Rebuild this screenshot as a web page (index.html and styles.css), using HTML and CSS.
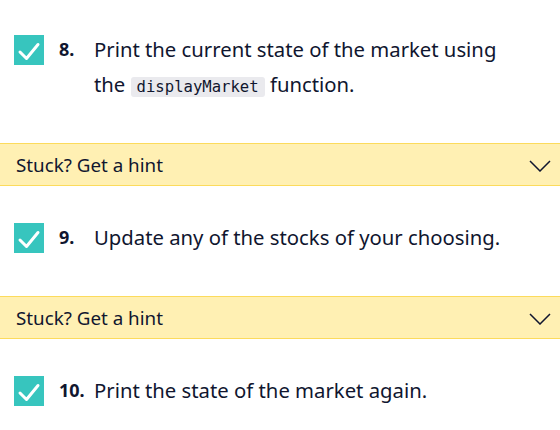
FILE: index.html
```html
<!DOCTYPE html>
<html lang="en">
<head>
<meta charset="utf-8">
<title>Checkpoints</title>
<link rel="stylesheet" href="styles.css">
</head>
<body>
<ol class="steps">
  <li class="step">
    <div class="task">
      <span class="check"><svg viewBox="0 0 30 30" width="30" height="30"><rect width="30" height="30" fill="#37c5be"/><polyline points="6,17 12.5,23.5 24,9.5" fill="none" stroke="#fff" stroke-width="3" stroke-linecap="round" stroke-linejoin="round"/></svg></span>
      <span class="num">8.</span>
      <p class="text"><span>Print the current state of the market using the</span> <code>displayMarket</code> <span>function.</span></p>
    </div>
    <div class="hint"><span>Stuck? Get a hint</span><svg class="chev" viewBox="0 0 22 12" width="22" height="12"><polyline points="1,1 11,11 21,1" fill="none" stroke="#10162f" stroke-width="1.5"/></svg></div>
  </li>
  <li class="step">
    <div class="task">
      <span class="check"><svg viewBox="0 0 30 30" width="30" height="30"><rect width="30" height="30" fill="#37c5be"/><polyline points="6,17 12.5,23.5 24,9.5" fill="none" stroke="#fff" stroke-width="3" stroke-linecap="round" stroke-linejoin="round"/></svg></span>
      <span class="num">9.</span>
      <p class="text">Update any of the stocks of your choosing.</p>
    </div>
    <div class="hint"><span>Stuck? Get a hint</span><svg class="chev" viewBox="0 0 22 12" width="22" height="12"><polyline points="1,1 11,11 21,1" fill="none" stroke="#10162f" stroke-width="1.5"/></svg></div>
  </li>
  <li class="step">
    <div class="task">
      <span class="check"><svg viewBox="0 0 30 30" width="30" height="30"><rect width="30" height="30" fill="#37c5be"/><polyline points="6,17 12.5,23.5 24,9.5" fill="none" stroke="#fff" stroke-width="3" stroke-linecap="round" stroke-linejoin="round"/></svg></span>
      <span class="num">10.</span>
      <p class="text">Print the state of the market again.</p>
    </div>
  </li>
</ol>
</body>
</html>
```
FILE: styles.css
```css
html, body {
  margin: 0;
  padding: 0;
  background: #fff;
}
body {
  font-family: "Noto Sans", sans-serif;
  color: #10162f;
}
.steps {
  list-style: none;
  margin: 0;
  padding: 0;
}
.task {
  display: flex;
  align-items: flex-start;
  padding: 34px 40px 41px 14px;
}
.step:first-child .task {
  padding-top: 32px;
}
.check {
  flex: none;
  display: flex;
  align-items: center;
  height: 35px;
  width: 30px;
  margin-right: 15px;
}
.check svg {
  display: block;
}
.num {
  flex: none;
  width: 35px;
  font-weight: 700;
  font-size: 18px;
  line-height: 35px;
}
.text {
  margin: 0;
  flex: 1;
  font-size: 20.3px;
  line-height: 35px;
}
code {
  display: inline-block;
  font-family: "DejaVu Sans Mono", monospace;
  font-size: 15.6px;
  line-height: 20px;
  background: #eaeaee;
  border-radius: 3px;
  padding: 0 6px;
  color: #10162f;
}
.hint {
  display: flex;
  align-items: center;
  justify-content: space-between;
  height: 41px;
  padding: 0 9px 0 16px;
  background: #fff0b3;
  border-top: 1px solid #fcdb5c;
  border-bottom: 1px solid #fcdb5c;
  font-size: 18.8px;
}
.chev {
  display: block;
  margin-top: 2px;
}
```
